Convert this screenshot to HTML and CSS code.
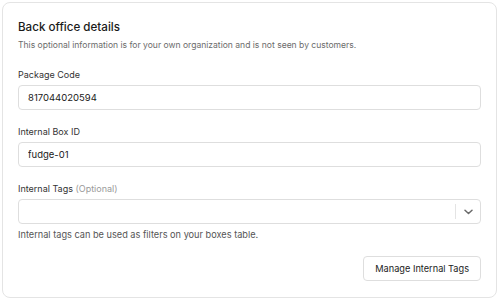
FILE: index.html
```html
<!DOCTYPE html>
<html lang="en">
<head>
  <meta charset="UTF-8" />
  <title>Back office details</title>
  <link rel="stylesheet" href="styles.css">
</head>
<body>
  <section class="card">
    <h2 class="card-title">Back office details</h2>
    <p class="card-sub">This optional information is for your own organization and is not seen by customers.</p>

    <div class="field">
      <label>Package Code</label>
      <input type="text" class="text-input" value="817044020594" />
    </div>

    <div class="field">
      <label>Internal Box ID</label>
      <input type="text" class="text-input" value="fudge-01" />
    </div>

    <div class="field">
      <label>Internal Tags <span class="optional">(Optional)</span></label>
      <div class="select">
        <div class="select-value"></div>
        <span class="select-sep"></span>
        <span class="select-arrow">
          <svg width="9" height="6" viewBox="0 0 9 6"><path d="M1 1.2 L4.5 4.5 L8 1.2" fill="none" stroke="#6b6b6b" stroke-width="1.5" stroke-linecap="round" stroke-linejoin="round"/></svg>
        </span>
      </div>
      <p class="help">Internal tags can be used as filters on your boxes table.</p>
    </div>

    <div class="actions">
      <button class="btn">Manage Internal Tags</button>
    </div>
  </section>
</body>
</html>
```

FILE: styles.css
```css
* { box-sizing: border-box; }

body {
  margin: 0;
  background: #fff;
  color: #1c1c1c;
  font-family: 'Inter', 'Liberation Sans', sans-serif;
  font-size: 9px;
}

.card {
  margin: 2px 3px 3px 2px;
  border: 1px solid #e4e4e4;
  border-radius: 8px;
  padding: 16px 15px 16px;
}

.card-title {
  margin: 0;
  font-size: 11.6px;
  line-height: 16px;
  font-weight: 500;
  color: #1a1a1a;
}

.card-sub {
  margin: 3px 0 0;
  font-size: 8.55px;
  line-height: 14px;
  color: #6b6b6b;
}

.field {
  margin-top: 15px;
}

.field:first-of-type { margin-top: 16px; }

.field label {
  display: block;
  font-size: 9px;
  line-height: 14px;
  color: #333;
  margin-bottom: 3px;
}

.optional { color: #9a9a9a; }

.text-input {
  display: block;
  width: 100%;
  height: 25px;
  border: 1px solid #dedede;
  border-radius: 4px;
  padding: 0 9px;
  font: inherit;
  font-size: 9.5px;
  color: #1a1a1a;
  outline: none;
}

.select {
  display: flex;
  align-items: center;
  height: 25px;
  border: 1px solid #dedede;
  border-radius: 4px;
}

.select-value { flex: 1; }

.select-sep {
  width: 1px;
  height: 15px;
  background: #e4e4e4;
}

.select-arrow {
  width: 24px;
  display: flex;
  justify-content: center;
  align-items: center;
}

.help {
  margin: 4px 0 0;
  font-size: 9.2px;
  line-height: 14px;
  color: #555;
}

.actions {
  display: flex;
  justify-content: flex-end;
  margin-top: 14px;
}

.btn {
  height: 25px;
  padding: 0 11px;
  background: #fff;
  border: 1px solid #dedede;
  border-radius: 4px;
  font: inherit;
  font-size: 9.2px;
  color: #1c1c1c;
}
```
